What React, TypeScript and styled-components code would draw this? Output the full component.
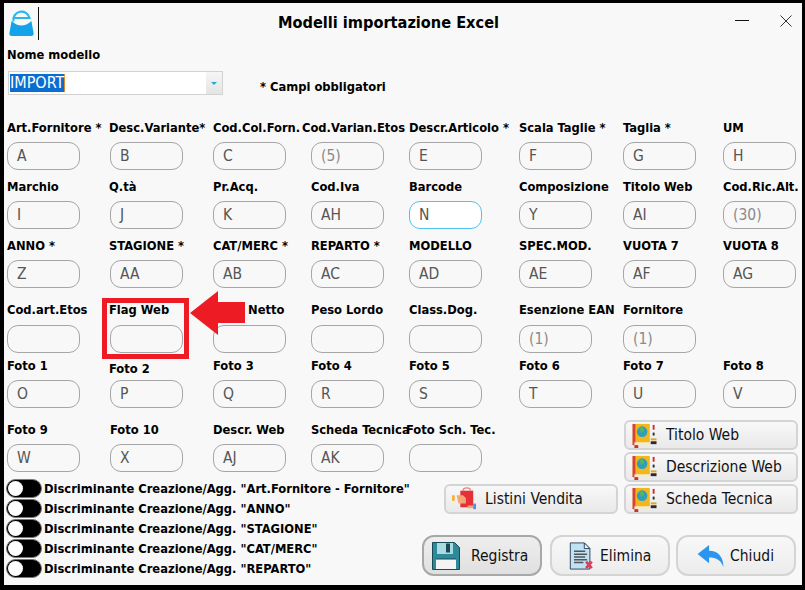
import { FC, ReactNode } from "react";
import styled, { createGlobalStyle } from "styled-components";

const GlobalStyle = createGlobalStyle`
  html, body {
    margin: 0;
    padding: 0;
    background: #000;
  }
  body {
    width: 805px;
    height: 590px;
    overflow: hidden;
    font-family: "DejaVu Sans Condensed", "DejaVu Sans", sans-serif;
    color: #000;
  }
`;

const Screen = styled.div`
  box-sizing: border-box;
  width: 805px;
  height: 590px;
  padding: 3px 3px 5px 4px;
  background: #000;
`;

const Window = styled.div`
  position: relative;
  width: 798px;
  height: 582px;
  background: #f8f8f8;
  display: flex;
  flex-direction: column;
  padding-left: 3px;
  box-sizing: border-box;
`;

const TitleBar = styled.div`
  height: 46px;
  display: grid;
  grid-template-columns: 31px 1fr 67px;
  align-items: start;
  margin-left: -3px;
`;

const LogoBox = styled.div`
  padding: 6px 0 0 5px;
  width: 31px;
  display: flex;
  svg {
    display: block;
  }
`;

const Divider = styled.div`
  position: absolute;
  left: 34px;
  top: 4px;
  width: 1px;
  height: 33px;
  background: #111;
`;

const Title = styled.div`
  font-size: 16.2px;
  font-weight: 700;
  text-align: center;
  padding-top: 10px;
  padding-left: 7px;
`;

const WindowControls = styled.div`
  display: flex;
  gap: 31px;
  padding: 12px 0 0 0;
  align-items: center;
  svg {
    display: block;
  }
`;

const FieldLabel = styled.div<{ $shift?: number; $gap?: number; $x?: number }>`
  font-size: 12.8px;
  font-weight: 700;
  line-height: 11px;
  height: 15px;
  white-space: nowrap;
  margin-left: ${(p) => p.$x ?? 0}px;
  margin-top: ${(p) => p.$shift ?? 0}px;
  margin-bottom: ${(p) => (p.$gap ?? 5) - (p.$shift ?? 0)}px;
`;

const ModelRow = styled.div`
  display: flex;
  flex-direction: column;
`;

const ModelLabel = styled(FieldLabel)`
  margin-bottom: 7px;
`;

const ComboLine = styled.div`
  display: flex;
  align-items: flex-end;
`;

const Combo = styled.div`
  box-sizing: border-box;
  margin-left: 1px;
  width: 215px;
  height: 24px;
  border: 1px solid #d2d2d2;
  background: #fff;
  display: flex;
  align-items: center;
  justify-content: space-between;
  padding-left: 1px;
`;

const ComboText = styled.span`
  background: #0a6ed1;
  color: #fff;
  font-size: 16px;
  line-height: 18px;
  border-right: 1px solid #e08a30;
`;

const ComboButton = styled.div`
  width: 16px;
  height: 22px;
  background: linear-gradient(#f6f6f6, #e4e4e4);
  display: flex;
  align-items: center;
  justify-content: center;
  &::after {
    content: "";
    border-left: 3px solid transparent;
    border-right: 3px solid transparent;
    border-top: 3px solid #2aa5d8;
  }
`;

const Required = styled.div`
  font-size: 12.8px;
  font-weight: 700;
  margin-left: 37px;
  margin-bottom: 1px;
  line-height: 15px;
`;

const FieldGrid = styled.div`
  display: grid;
  grid-template-columns: 102px 104px 98px 98px 110px 104px 100px 73px;
  margin-top: 27px;
`;

const Field = styled.div`
  display: flex;
  flex-direction: column;
  align-items: flex-start;
`;

const Input = styled.div<{ $focused?: boolean; $muted?: boolean; $inset?: number }>`
  box-sizing: border-box;
  width: 73px;
  height: 28px;
  margin-left: ${(p) => p.$inset ?? 0}px;
  border: 1px solid ${(p) => (p.$focused ? "#4fc3ee" : "#a6a6a6")};
  border-radius: 11px;
  background: ${(p) => (p.$focused ? "#fff" : "transparent")};
  color: ${(p) => (p.$muted ? "#8a8a8a" : "#555")};
  font-size: 15.5px;
  line-height: 26px;
  padding-left: 9px;
`;

const GridRow = styled.div<{ $top: number }>`
  display: contents;
  & > div {
    margin-top: ${(p) => p.$top}px;
  }
`;

const LowerArea = styled.div`
  display: grid;
  grid-template-columns: 415px 376px;
`;

const LowerLeft = styled.div`
  display: flex;
  flex-direction: column;
`;

const LastFields = styled.div`
  display: grid;
  grid-template-columns: 102px 104px 98px 98px 80px;
  margin-top: 16px;
`;

const Switches = styled.div`
  display: flex;
  flex-direction: column;
  margin-top: 6px;
  margin-left: -1px;
`;

const SwitchRow = styled.div`
  display: flex;
  align-items: center;
  height: 20px;
  gap: 2px;
  font-size: 12.8px;
  font-weight: 700;
  white-space: nowrap;
`;

const Switch = styled.div`
  box-sizing: border-box;
  width: 36px;
  height: 19px;
  border-radius: 10px;
  background: #000;
  border: 1px solid #777;
  position: relative;
  flex: none;
  &::before {
    content: "";
    position: absolute;
    left: 1px;
    top: 1px;
    width: 15px;
    height: 15px;
    border-radius: 50%;
    background: #fff;
  }
`;

const LowerRight = styled.div`
  display: flex;
  flex-direction: column;
  padding-top: 12px;
`;

const SideGrid = styled.div`
  display: grid;
  grid-template-columns: 174px 174px;
  grid-auto-rows: 30px;
  column-gap: 6px;
  row-gap: 2px;
  margin-left: 22px;
`;

const SideButton = styled.button<{ $col?: number }>`
  grid-column: ${(p) => p.$col ?? 2};
  box-sizing: border-box;
  border: 2px solid #d4d4d4;
  border-radius: 6px;
  background: linear-gradient(#f8f8f8, #e9e9e9);
  font-family: "DejaVu Sans Condensed", "DejaVu Sans", sans-serif;
  font-size: 15.5px;
  color: #111;
  display: flex;
  align-items: center;
  gap: 9px;
  padding: 0 0 0 6px;
  white-space: nowrap;
`;

const ActionRow = styled.div`
  display: flex;
  margin-top: 21px;
  gap: 8px;
`;

const ActionButton = styled.button<{ $primary?: boolean; $gap: number; $pad: number }>`
  box-sizing: border-box;
  width: 120px;
  height: 41px;
  border: 2px solid ${(p) => (p.$primary ? "#a8a8a8" : "#d4d4d4")};
  border-radius: 12px;
  background: ${(p) => (p.$primary ? "linear-gradient(#eeeeee, #e0e0e0)" : "linear-gradient(#f8f8f8, #ececec)")};
  font-family: "DejaVu Sans Condensed", "DejaVu Sans", sans-serif;
  font-size: 15.5px;
  color: #111;
  display: flex;
  align-items: center;
  gap: ${(p) => p.$gap}px;
  padding: 0 0 0 ${(p) => p.$pad}px;
  &:last-child {
    margin-left: -2px;
  }
`;

const Highlight = styled.div`
  position: absolute;
  left: 98px;
  top: 295px;
  box-sizing: border-box;
  width: 87px;
  height: 61px;
  border: 5px solid #ed1c24;
  pointer-events: none;
`;

const ArrowMark = styled.svg`
  position: absolute;
  left: 186px;
  top: 288px;
`;

const BookIcon: FC = () => (
  <svg width="25" height="25" viewBox="0 0 25 26">
    <rect x="1" y="1" width="17" height="20" fill="#f2b61e" />
    <rect x="0" y="1" width="3" height="22" fill="#d9432b" />
    <rect x="2" y="20" width="16" height="3" fill="#f6e9cf" />
    <circle cx="10" cy="9" r="5.5" fill="#2f9fb8" />
    <path d="M7 5.5 l4 -1 l1 4 l-3 2z" fill="#58b368" />
    <rect x="2" y="23" width="4" height="3" fill="#c8322a" />
    <rect x="21" y="2" width="2" height="5" fill="#c8322a" />
    <rect x="21" y="10" width="2" height="3" fill="#2b2b2b" />
    <rect x="19" y="16" width="6" height="2" fill="#e8a31a" />
    <rect x="19" y="19" width="6" height="3" fill="#2b2b2b" />
  </svg>
);

const BagIcon: FC = () => (
  <svg width="24" height="24" viewBox="0 0 26 24">
    <path d="M9 3 h14 v18 h-14z" fill="#e5303a" />
    <path d="M12 3 a4 3 0 0 1 8 0" fill="none" stroke="#e5887a" strokeWidth="1.5" />
    <path d="M5 8 h7 l3 3 v6 h-8z" fill="#f2a777" />
    <rect x="0" y="8" width="3" height="6" fill="#f4b23c" />
    <path d="M17 19 h6 v3 h-6z" fill="#f2a777" />
    <rect x="23" y="17" width="3" height="6" fill="#4f8fe0" />
  </svg>
);

const FloppyIcon: FC = () => (
  <svg width="28" height="28" viewBox="0 0 28 28">
    <path d="M0.5 0.5 h22 l5 5 v22 h-27z" fill="#2e8a9a" stroke="#164a55" strokeWidth="1" />
    <rect x="5" y="1" width="16" height="11" fill="#a9dbe3" />
    <rect x="14" y="1.5" width="4" height="9" fill="#164a55" />
    <rect x="4" y="17" width="20" height="10" fill="#f4f4f4" />
    <path d="M4 17 h20" stroke="#164a55" />
  </svg>
);

const DocDeleteIcon: FC = () => (
  <svg width="25" height="28" viewBox="0 0 26 30">
    <path d="M1 1 h15 l6 6 v22 h-21z" fill="#bfe3f5" stroke="#2a3f55" strokeWidth="1" />
    <path d="M16 1 v6 h6z" fill="#eaf6fc" stroke="#2a3f55" strokeWidth="1" />
    <path d="M5 10 h12 M5 13 h14 M5 16 h12 M5 19 h14 M5 22 h10" stroke="#555" strokeWidth="1.6" />
    <path d="M18 21 l6 7 M24 21 l-6 7" stroke="#d9405c" strokeWidth="3" />
  </svg>
);

const ReplyIcon: FC = () => (
  <svg width="28" height="22" viewBox="0 0 28 23">
    <path d="M12 0 L0 9.5 L12 19 V13 C19 13 24 15 27 23 C27 12 21 6 12 6 Z" fill="#2b96f0" />
  </svg>
);

const LogoIcon: FC = () => (
  <svg width="25" height="27" viewBox="0 0 25 27">
    <path d="M4.5 12.5 A8 8 0 1 1 20.5 9 H5" fill="none" stroke="#2bb5ee" strokeWidth="2.2" />
    <path d="M2.6 12 Q12.5 21 22.4 12 L24.6 24 Q25 27 22 27 H3 Q0 27 0.4 24 Z" fill="#12a3ea" />
  </svg>
);

type FieldDef = {
  label: string;
  value?: string;
  muted?: boolean;
  focused?: boolean;
  inset?: number;
  shift?: number;
  x?: number;
  gap?: number;
};

const LabeledField: FC<FieldDef> = ({ label, value, muted, focused, inset, shift, x, gap }) => (
  <Field>
    <FieldLabel $shift={shift} $x={x} $gap={gap}>
      {label}
    </FieldLabel>
    <Input $muted={muted} $focused={focused} $inset={inset}>
      {value}
    </Input>
  </Field>
);

const rows: { top: number; fields: FieldDef[] }[] = [
  {
    top: 0,
    fields: [
      { label: "Art.Fornitore *", value: "A" },
      { label: "Desc.Variante*", value: "B", inset: 1 },
      { label: "Cod.Col.Forn.", value: "C" },
      { label: "Cod.Varian.Etos", value: "(5)", muted: true, x: -9 },
      { label: "Descr.Articolo *", value: "E" },
      { label: "Scala Taglie *", value: "F" },
      { label: "Taglia *", value: "G" },
      { label: "UM", value: "H" },
    ],
  },
  {
    top: 11,
    fields: [
      { label: "Marchio", value: "I" },
      { label: "Q.tà", value: "J", inset: 1 },
      { label: "Pr.Acq.", value: "K" },
      { label: "Cod.Iva", value: "AH" },
      { label: "Barcode", value: "N", focused: true },
      { label: "Composizione", value: "Y" },
      { label: "Titolo Web", value: "AI" },
      { label: "Cod.Ric.Alt.", value: "(30)", muted: true },
    ],
  },
  {
    top: 11,
    fields: [
      { label: "ANNO *", value: "Z" },
      { label: "STAGIONE *", value: "AA", inset: 1 },
      { label: "CAT/MERC *", value: "AB" },
      { label: "REPARTO *", value: "AC" },
      { label: "MODELLO", value: "AD" },
      { label: "SPEC.MOD.", value: "AE" },
      { label: "VUOTA 7", value: "AF" },
      { label: "VUOTA 8", value: "AG" },
    ],
  },
  {
    top: 16,
    fields: [
      { label: "Cod.art.Etos", gap: 6 },
      { label: "Flag Web", inset: 1, gap: 6 },
      { label: "Peso Netto", gap: 6 },
      { label: "Peso Lordo", gap: 6 },
      { label: "Class.Dog.", gap: 6 },
      { label: "Esenzione EAN", value: "(1)", muted: true, gap: 6 },
      { label: "Fornitore", value: "(1)", muted: true, gap: 6 },
    ],
  },
  {
    top: 7,
    fields: [
      { label: "Foto 1", value: "O" },
      { label: "Foto 2", value: "P", inset: 1, shift: 3 },
      { label: "Foto 3", value: "Q" },
      { label: "Foto 4", value: "R" },
      { label: "Foto 5", value: "S" },
      { label: "Foto 6", value: "T" },
      { label: "Foto 7", value: "U" },
      { label: "Foto 8", value: "V" },
    ],
  },
];

const lastFields: FieldDef[] = [
  { label: "Foto 9", value: "W" },
  { label: "Foto 10", value: "X", inset: 1, x: 1 },
  { label: "Descr. Web", value: "AJ" },
  { label: "Scheda Tecnica", value: "AK" },
  { label: "Foto Sch. Tec.", x: -3 },
];

const discriminants = ["Art.Fornitore - Fornitore", "ANNO", "STAGIONE", "CAT/MERC", "REPARTO"];

const SideBtn: FC<{ icon: ReactNode; col?: number; children: ReactNode }> = ({ icon, col, children }) => (
  <SideButton $col={col}>
    {icon}
    <span>{children}</span>
  </SideButton>
);

const App: FC = () => (
  <Screen>
    <GlobalStyle />
    <Window>
      <TitleBar>
        <LogoBox>
          <LogoIcon />
        </LogoBox>
        <Title>Modelli importazione Excel</Title>
        <WindowControls>
          <svg width="14" height="2" viewBox="0 0 14 2">
            <rect width="14" height="1" fill="#111" />
          </svg>
          <svg width="12" height="12" viewBox="0 0 12 12">
            <path d="M0.5 0.5 L11.5 11.5 M11.5 0.5 L0.5 11.5" stroke="#333" strokeWidth="1" />
          </svg>
        </WindowControls>
      </TitleBar>
      <Divider />
      <ModelRow>
        <ModelLabel>Nome modello</ModelLabel>
        <ComboLine>
          <Combo>
            <ComboText>IMPORT</ComboText>
            <ComboButton />
          </Combo>
          <Required>* Campi obbligatori</Required>
        </ComboLine>
      </ModelRow>
      <FieldGrid>
        {rows.map((row, i) => (
          <GridRow key={i} $top={row.top}>
            {row.fields.map((f) => (
              <LabeledField key={f.label} {...f} />
            ))}
            {row.fields.length < 8 ? <div /> : null}
          </GridRow>
        ))}
      </FieldGrid>
      <LowerArea>
        <LowerLeft>
          <LastFields>
            {lastFields.map((f) => (
              <LabeledField key={f.label} {...f} />
            ))}
          </LastFields>
          <Switches>
            {discriminants.map((d) => (
              <SwitchRow key={d}>
                <Switch />
                <span>Discriminante Creazione/Agg. "{d}"</span>
              </SwitchRow>
            ))}
          </Switches>
        </LowerLeft>
        <LowerRight>
          <SideGrid>
            <SideBtn icon={<BookIcon />}>Titolo Web</SideBtn>
            <SideBtn icon={<BookIcon />}>Descrizione Web</SideBtn>
            <SideBtn icon={<BagIcon />} col={1}>
              Listini Vendita
            </SideBtn>
            <SideBtn icon={<BookIcon />}>Scheda Tecnica</SideBtn>
          </SideGrid>
          <ActionRow>
            <ActionButton $primary $gap={11} $pad={8}>
              <FloppyIcon />
              Registra
            </ActionButton>
            <ActionButton $gap={6} $pad={17}>
              <DocDeleteIcon />
              Elimina
            </ActionButton>
            <ActionButton $gap={5} $pad={19}>
              <ReplyIcon />
              Chiudi
            </ActionButton>
          </ActionRow>
        </LowerRight>
      </LowerArea>
      <Highlight />
      <ArrowMark width="56" height="44" viewBox="0 0 56 44">
        <path d="M0 22 L28 0 V11 H55 V32 H28 V44 Z" fill="#ed1c24" />
      </ArrowMark>
    </Window>
  </Screen>
);

export default App;
